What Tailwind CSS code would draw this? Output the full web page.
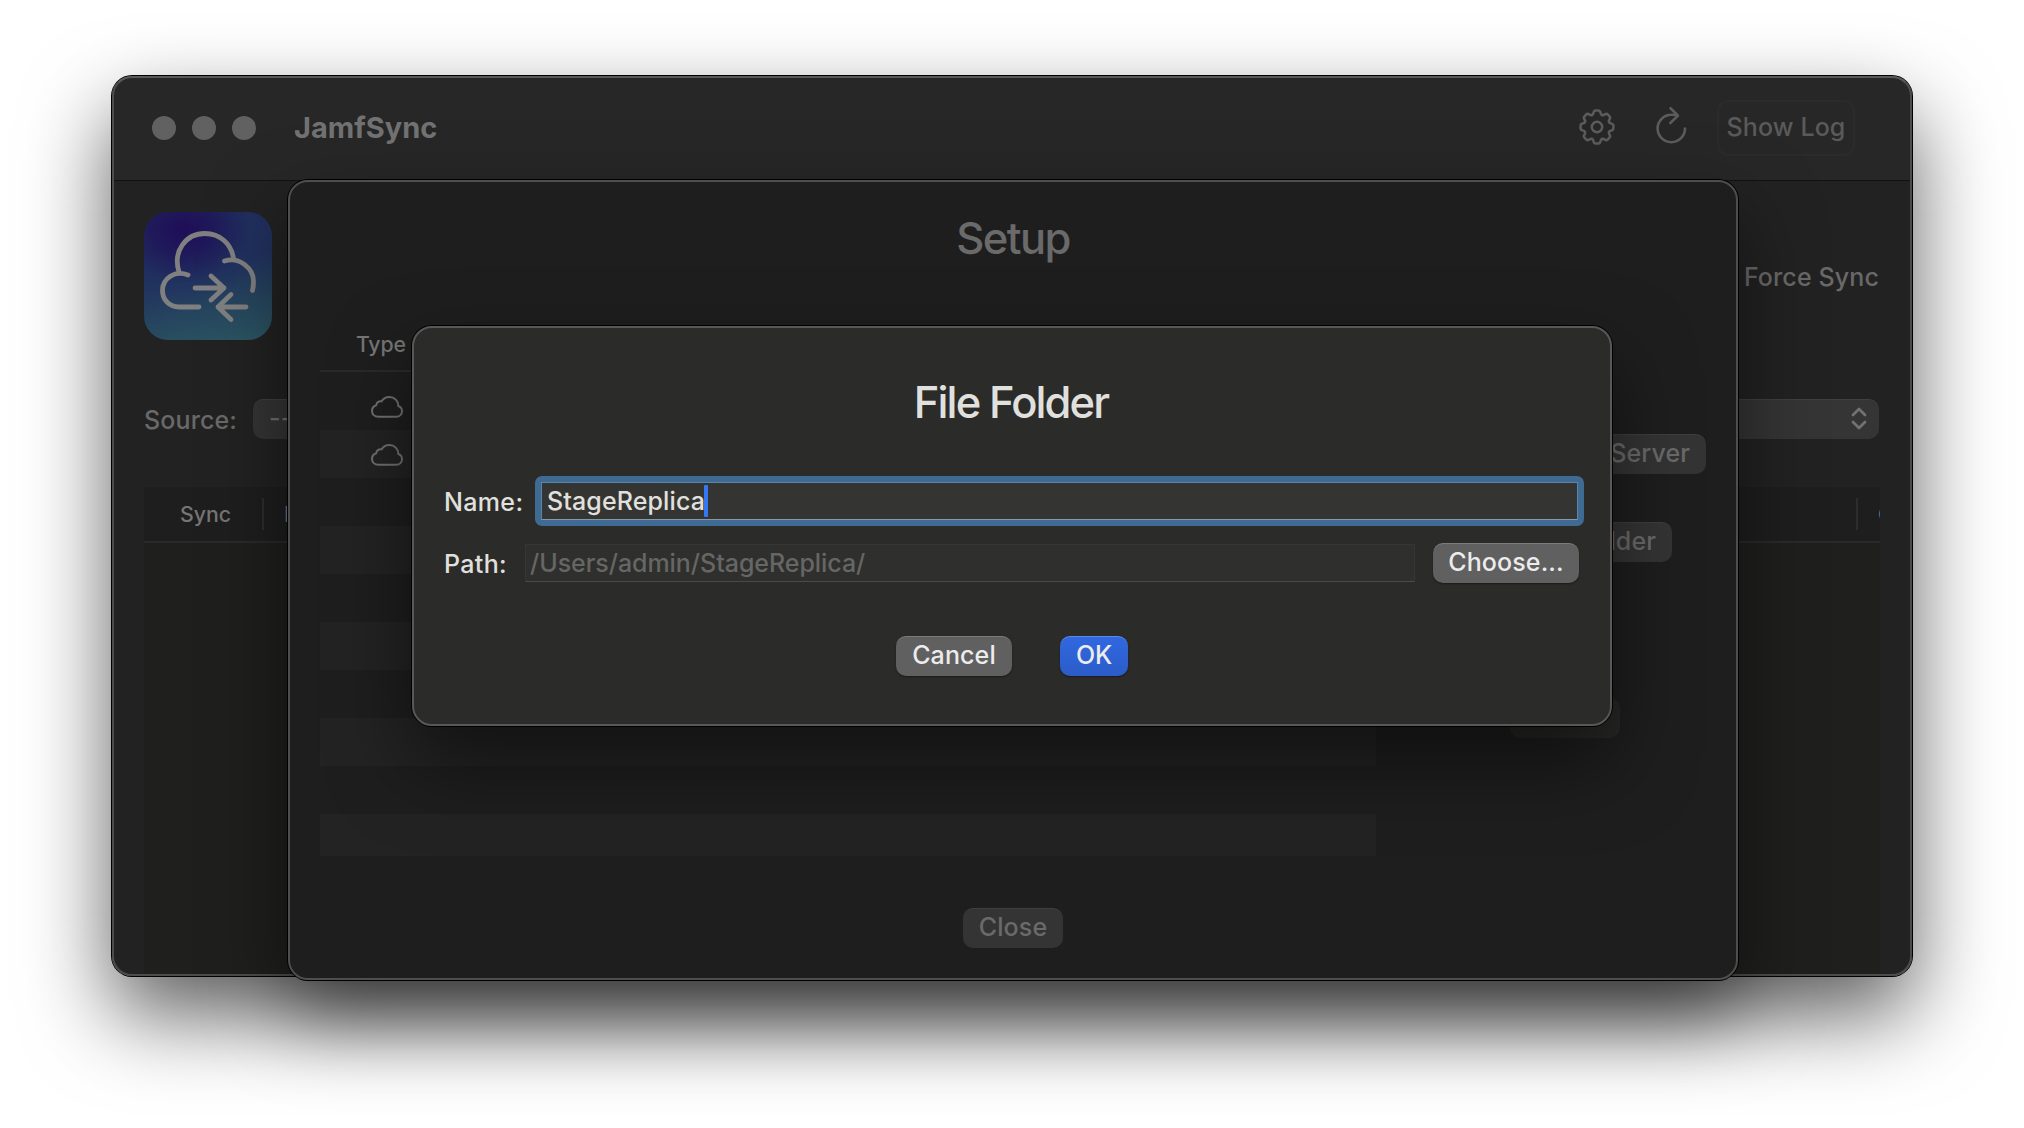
<!DOCTYPE html>
<html lang="en">
<head>
<meta charset="utf-8">
<title>JamfSync</title>
<script src="https://cdn.jsdelivr.net/npm/@tailwindcss/browser@4"></script>
</head>
<body class="relative w-[2024px] h-[1128px] overflow-hidden bg-white font-['Inter',sans-serif] font-[450] text-[25px] leading-[30px] tracking-[0.12px] whitespace-nowrap">

<!-- Main window -->
<div class="absolute left-[112px] top-[76px] w-[1800px] h-[900px] rounded-[20px] shadow-[0_0_0_1px_#000,0_38px_86px_rgba(0,0,0,0.64)]">
  <div class="w-full h-full rounded-[20px] overflow-hidden bg-[#222222] flex flex-col">
    <header class="h-[105px] shrink-0 bg-[#272727] border-b border-[#121212] flex items-center pl-10 pr-[57px]">
      <div class="flex gap-4">
        <span class="size-6 rounded-full bg-[#616161]"></span>
        <span class="size-6 rounded-full bg-[#616161]"></span>
        <span class="size-6 rounded-full bg-[#616161]"></span>
      </div>
      <h1 class="ml-[38px] text-[29px] leading-9 font-[650] tracking-[0px] text-[#727272]">JamfSync</h1>
      <div class="ml-auto flex items-center">
        <svg class="w-9 h-9 mr-[36px] -mt-[3px]" viewBox="-18 -18 36 36" fill="none" stroke="#5c5c5c" stroke-width="2.5" stroke-linecap="round">
          <defs><path id="tooth" d="M-5 -12C-3.9 -12.45 -3.7 -13 -3.4 -14.4Q-3 -16.4 -1.3 -16.4H1.3Q3 -16.4 3.4 -14.4C3.7 -13 3.9 -12.45 5 -12"/></defs>
          <use href="#tooth"/><use href="#tooth" transform="rotate(45)"/><use href="#tooth" transform="rotate(90)"/><use href="#tooth" transform="rotate(135)"/>
          <use href="#tooth" transform="rotate(180)"/><use href="#tooth" transform="rotate(225)"/><use href="#tooth" transform="rotate(270)"/><use href="#tooth" transform="rotate(315)"/>
          <circle r="5.2"/>
        </svg>
        <svg class="w-10 h-10 mr-[26px] -mt-[6px]" viewBox="0 0 40 40" fill="none" stroke="#5c5c5c" stroke-width="2.6" stroke-linecap="round" stroke-linejoin="round">
          <path d="M34 23.5A13.7 13.7 0 1 1 20.3 9.8Q23.5 9.6 26.5 10.6M19.5 3.2L27 10.6L19.3 18"/>
        </svg>
        <button class="w-[138px] h-14 rounded-[12px] border-2 border-[#2b2b2b] text-[#5a5a5a] pb-[3px]">Show Log</button>
      </div>
    </header>
    <main class="flex-1 px-8 pt-[31px] flex flex-col">
      <div class="flex items-center justify-between">
        <div class="size-32 rounded-[24px] bg-[radial-gradient(ellipse_70%_55%_at_30%_14%,#1f0d58_0%,#1f1a5a_35%,#20305f88_75%,transparent_100%),linear-gradient(165deg,#202c5e_0%,#21325f_45%,#27485f_75%,#2c5864_100%)]">
          <svg class="size-32" viewBox="0 0 128 128" fill="none" stroke="#808080" stroke-width="4.8" stroke-linecap="round" stroke-linejoin="round">
            <path d="M35 60C28.500 39 42 21.500 61 21.500C76 21.500 87.500 32 89.500 46.500"/>
            <path d="M44 63C31 58 18.500 66 18.500 78.500C18.500 88 25.500 95 35 95H55"/>
            <path d="M80.500 49C95 44.500 110 56 109.500 70Q109.500 75 108.500 78.500"/>
            <path d="M51 76H80M67 64L80 76L67 88"/>
            <path d="M102 95H74M87 82.500L74 95L87 107.500"/>
          </svg>
        </div>
        <span class="text-[#696969] pt-0.5 pr-px">Force Sync</span>
      </div>
      <div class="mt-[59px] flex items-center h-10">
        <span class="text-[#696969] w-[109px] pt-px">Source:</span>
        <div class="w-[500px] h-10 rounded-[10px] bg-[#353535] border-t border-[#404040] pl-4 pb-1 flex items-center text-[#707070]">--</div>
        <div class="ml-auto w-[500px] h-10 rounded-[10px] bg-[#353535] border-t border-[#404040] flex items-center justify-end pr-3 pb-px mr-px">
          <svg class="w-4 h-6" viewBox="0 0 16 24" fill="none" stroke="#727272" stroke-width="2.8" stroke-linecap="round" stroke-linejoin="round"><path d="M2 8L8 2L14 8M2 15L8 21L14 15"/></svg>
        </div>
      </div>
      <section class="mt-12 flex-1 flex flex-col bg-[#1f1f1d]">
        <div class="h-14 bg-[#1e1e1e] border-b-2 border-[#2a2a2a] flex items-center overflow-hidden text-[21.3px] font-medium tracking-normal text-[#757575]">
          <span class="w-[118px] pl-9">Sync</span>
          <span class="w-0.5 h-8 bg-[#2d2d2d]"></span>
          <span class="pl-5">Name</span>
          <span class="ml-auto w-0.5 h-8 bg-[#2d2d2d]"></span>
          <span class="w-[22px] pl-[20px] overflow-hidden">C</span>
        </div>
      </section>
    </main>
  </div>
  <div class="absolute inset-0 rounded-[20px] border-2 border-[#4c4c4c] border-t-[#585a58]"></div>
</div>

<!-- Setup sheet -->
<div class="absolute left-[288px] top-[180px] w-[1450px] h-[800px] rounded-[20px] bg-[#1e1e1e] border-2 border-[#4e4e4e] shadow-[0_0_0_1px_#000,0_36px_80px_rgba(0,0,0,0.5)] px-[30px] flex flex-col text-[#6a6a6a]">
  <h2 class="mt-[31px] h-[50px] leading-[50px] text-[43.5px] tracking-[-1.6px] text-center">Setup</h2>
  <div class="mt-[55px] flex">
    <div class="w-[1056px] h-[538px] overflow-hidden">
      <div class="h-[54px] border-b-2 border-[#2a2a2a] pl-9 pt-[11px] text-[21.3px] font-medium tracking-[-0.2px] text-[#757575]">Type</div>
      <div class="mt-[10px] h-12 flex items-center pl-[51px] pt-0.5">
        <svg class="w-8 h-[22px]" viewBox="0 0 32 22" fill="none" stroke="#707070" stroke-width="2"><path d="M7.500 20.800C3.500 20.800 1 18.200 1 15C1 12.200 2.600 10 5.200 9.200C5.400 6.600 7.600 4.800 10.600 5.300C12.200 2.500 15 1 18.400 1C23.500 1 27.400 5 27.400 10C29.600 10.800 31 12.800 31 15C31 18.300 28.700 20.800 25.300 20.800Z"/></svg>
      </div>
      <div class="h-12 flex items-center pl-[51px] pt-0.5 bg-[#232323]">
        <svg class="w-8 h-[22px]" viewBox="0 0 32 22" fill="none" stroke="#707070" stroke-width="2"><path d="M7.500 20.800C3.500 20.800 1 18.200 1 15C1 12.200 2.600 10 5.200 9.200C5.400 6.600 7.600 4.800 10.600 5.300C12.200 2.500 15 1 18.400 1C23.500 1 27.400 5 27.400 10C29.600 10.800 31 12.800 31 15C31 18.300 28.700 20.800 25.300 20.800Z"/></svg>
      </div>
      <div class="h-12"></div>
      <div class="h-12 bg-[#232323]"></div>
      <div class="h-12"></div>
      <div class="h-12 bg-[#232323]"></div>
      <div class="h-12"></div>
      <div class="h-12 bg-[#232323]"></div>
      <div class="h-12"></div>
      <div class="h-12 bg-[#232323]"></div>
    </div>
    <div class="flex-1 ml-12 pt-[116px] flex flex-col items-center">
      <button class="w-[282px] h-10 rounded-[10px] bg-[#343434] border-t border-[#3e3e3e] pb-[3px] pr-4 text-right">Add Jamf Pro Server</button>
      <button class="mt-12 w-[214px] h-10 rounded-[10px] bg-[#343434] border-t border-[#3e3e3e] pb-[3px] pr-4 text-right">Add File Folder</button>
      <div class="mt-[136px] w-[110px] h-10 rounded-[10px] bg-[#272725]"></div>
    </div>
  </div>
  <button class="mt-[52px] w-[100px] h-10 rounded-[10px] bg-[#343434] border-t border-[#3e3e3e] self-center pb-[3px]">Close</button>
</div>

<!-- File folder dialog -->
<div class="absolute left-[412px] top-[326px] w-[1200px] h-[400px] rounded-[20px] bg-[#2b2b29] border-2 border-[#585858] shadow-[0_0_0_1px_#000,0_36px_80px_rgba(0,0,0,0.5)] pl-[30px] flex flex-col text-[#e0e0df]">
  <h2 class="mt-[49px] h-[50px] leading-[50px] text-[43.5px] tracking-[-1.9px] text-center pr-8">File Folder</h2>
  <div class="mt-[49px] h-[50px] flex items-center">
    <label class="w-[91px] pt-0.5 tracking-[0.35px]">Name:</label>
    <div class="w-[1049px] h-[50px] rounded-[7px] bg-[#3f6a92] p-1.5">
      <div class="h-full border border-[#5585b0] border-b-[#8699aa] bg-[#343432] flex items-center pl-[5px] pb-px">
        <span>StageReplica</span><span class="w-1 h-8 rounded-[1px] bg-[#3478f6] -ml-px"></span>
      </div>
    </div>
  </div>
  <div class="mt-[17px] h-10 flex items-center">
    <label class="w-[81px] pt-px tracking-[0.35px]">Path:</label>
    <div class="w-[890px] h-[38px] bg-[#2f2f2d] border border-[#363634] border-b-[#4a4a48] flex items-center pl-1 pb-px text-[#666665] tracking-[-0.05px]">/Users/admin/StageReplica/</div>
    <button class="ml-[18px] w-[146px] h-10 rounded-[10px] bg-[#606060] border-t border-[#7c7c7c] shadow-[0_1px_2px_rgba(0,0,0,0.4)] pb-[4px] text-[#ececec]">Choose...</button>
  </div>
  <div class="mt-[53px] flex justify-center gap-12 pr-[30px] text-[#ececec]">
    <button class="w-[116px] h-10 rounded-[10px] bg-[#606060] border-t border-[#7c7c7c] shadow-[0_1px_2px_rgba(0,0,0,0.4)] pb-[3px]">Cancel</button>
    <button class="w-[68px] h-10 rounded-[10px] bg-linear-to-b from-[#3168e0] to-[#2b5cc8] border-t border-[#5a8af0] shadow-[0_1px_2px_rgba(0,0,0,0.4)] pb-[3px] tracking-[-0.3px]">OK</button>
  </div>
</div>
</body>
</html>
